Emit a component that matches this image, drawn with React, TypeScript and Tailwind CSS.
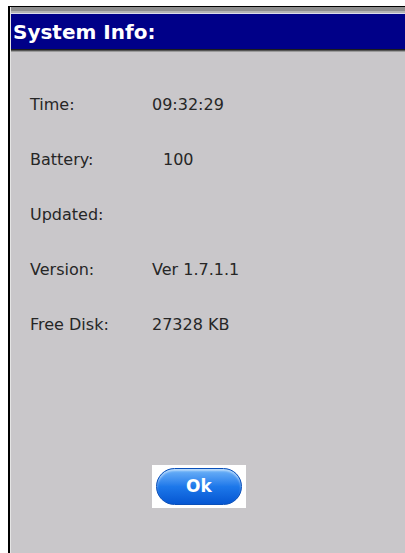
const rows: { label: string; value: string; indent?: boolean }[] = [
  { label: 'Time:', value: '09:32:29' },
  { label: 'Battery:', value: '100', indent: true },
  { label: 'Updated:', value: '' },
  { label: 'Version:', value: 'Ver 1.7.1.1' },
  { label: 'Free Disk:', value: '27328 KB' },
]

export default function App() {
  return (
    <div className="w-[405px] h-[553px] bg-white pt-[6px] pl-[8px] overflow-hidden font-['DejaVu_Sans',sans-serif]">
      <div className="h-full flex flex-col border-l-2 border-black bg-[#c9c7ca]">
        {/* window chrome above the caption */}
        <div className="h-[1px] bg-black" />
        <div className="flex-1 flex flex-col border-l border-[#e4e4e4]">
          <div className="h-[4px] bg-[#8e8e8e]" />
          <div className="h-[2px] bg-[#b4b4b4]" />
          <div className="h-[1px] bg-[#dcdcec]" />
          <div className="h-[35px] bg-[#000088] flex items-center pl-[2px] text-white font-bold text-[20px] leading-none">
            System Info:
          </div>
          <div className="h-[1px] bg-[#1c1c1c]" />
          <div className="h-[1px] bg-[#555555]" />
          <div className="h-[1px] bg-[#9a9a9a]" />

          <div className="pt-[44px] pl-[19px] text-[16px] leading-[18px] text-[#262626]">
            {rows.map((r) => (
              <div key={r.label} className="h-[55px] flex">
                <span className="w-[122px]">{r.label}</span>
                <span className={r.indent ? 'pl-[11px]' : ''}>{r.value}</span>
              </div>
            ))}
          </div>

          <div className="mt-auto mb-[45px] pl-[141px] flex">
            <div className="w-[94px] h-[43px] bg-white p-[3px] flex items-center justify-center">
              <button className="w-[86px] h-[37px] rounded-full border border-[#0a4fb8] bg-gradient-to-b from-[#6fb4f8] via-[#1d78ea] to-[#0656d2] text-white font-bold text-[17px] leading-none shadow-[inset_0_2px_2px_rgba(255,255,255,0.5)]">
                Ok
              </button>
            </div>
          </div>
        </div>
      </div>
    </div>
  )
}
